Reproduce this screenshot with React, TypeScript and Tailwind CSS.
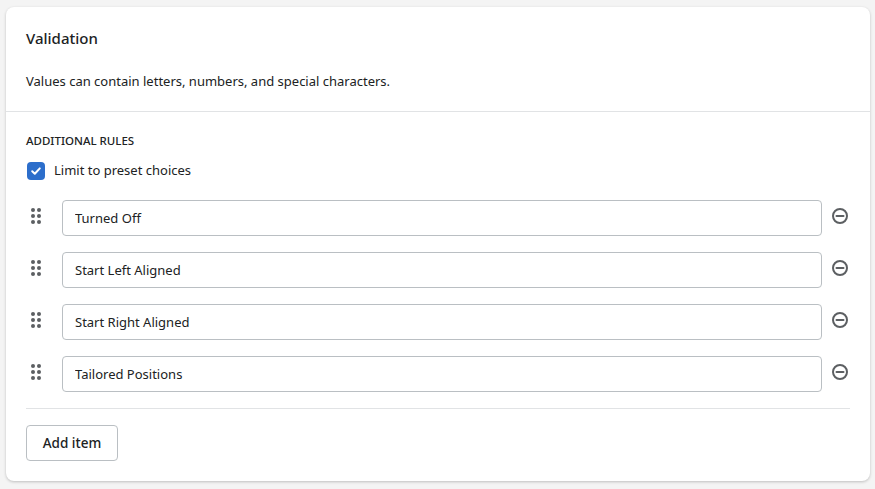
const ITEMS = ["Turned Off", "Start Left Aligned", "Start Right Aligned", "Tailored Positions"];

function DragHandle() {
  return (
    <svg width="10" height="16" viewBox="0 0 10 16" className="fill-[#5c5f62]">
      <circle cx="2" cy="2" r="2" />
      <circle cx="8" cy="2" r="2" />
      <circle cx="2" cy="8" r="2" />
      <circle cx="8" cy="8" r="2" />
      <circle cx="2" cy="14" r="2" />
      <circle cx="8" cy="14" r="2" />
    </svg>
  );
}

function RemoveIcon() {
  return (
    <svg width="16" height="16" viewBox="0 0 16 16" fill="none" className="stroke-[#5c5f62]">
      <circle cx="8" cy="8" r="7" strokeWidth="2" />
      <path d="M4.5 8h7" strokeWidth="2" strokeLinecap="round" />
    </svg>
  );
}

function Row({ value }: { value: string }) {
  return (
    <div className="flex h-9 items-center">
      <div className="flex w-9 shrink-0 pl-[5px] pb-1">
        <DragHandle />
      </div>
      <input
        readOnly
        value={value}
        className="h-9 w-[760px] rounded-[4px] border border-[#babfc3] bg-white px-3 text-[13px] text-[#202223] outline-none"
      />
      <div className="flex flex-1 pl-[10px] pb-1">
        <RemoveIcon />
      </div>
    </div>
  );
}

export default function App() {
  return (
    <div className="h-[489px] overflow-hidden bg-[#f4f4f4] pl-[6px] pr-[5px] pt-[7px] font-['Noto_Sans',sans-serif] text-[13px] text-[#202223]">
      <div className="h-[474px] rounded-lg bg-white shadow-[0_1px_3px_rgba(0,0,0,0.22)]">
        <section className="h-[105px] border-b border-[#e1e3e5] px-5 pt-[21px]">
          <h2 className="text-[15px] leading-5 font-medium">Validation</h2>
          <p className="mt-[23px] leading-5">Values can contain letters, numbers, and special characters.</p>
        </section>
        <section className="px-5 pt-[21px]">
          <h3 className="text-[11.5px] leading-4 font-medium">ADDITIONAL RULES</h3>
          <label className="mt-[12px] flex items-center gap-[9px] pl-[1px]">
            <span className="flex size-[18px] items-center justify-center rounded-[4px] bg-[#2c6ecb]">
              <svg width="12" height="12" viewBox="0 0 12 12" fill="none">
                <path d="M2.2 6.3 4.8 8.8 9.8 3.4" stroke="white" strokeWidth="2" strokeLinecap="round" strokeLinejoin="round" />
              </svg>
            </span>
            Limit to preset choices
          </label>
          <div className="mt-[19px] flex flex-col gap-4">
            {ITEMS.map((item) => (
              <Row key={item} value={item} />
            ))}
          </div>
          <div className="mt-4 border-t border-[#e1e3e5] pt-4">
            <button className="h-9 w-[92px] rounded-[4px] border border-[#babfc3] bg-white pt-[2px] text-[13.5px] font-medium">
              Add item
            </button>
          </div>
        </section>
      </div>
    </div>
  );
}
